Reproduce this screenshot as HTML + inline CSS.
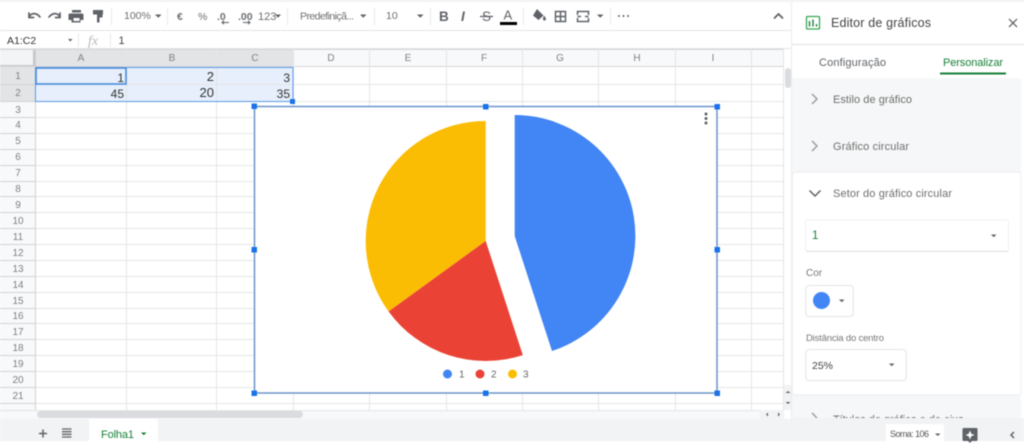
<!DOCTYPE html>
<html><head><meta charset="utf-8">
<style>
html,body{margin:0;padding:0;background:#fff;width:1024px;height:446px;overflow:hidden}
svg{display:block;filter:blur(.4px)}
text{font-family:"Liberation Sans",sans-serif;fill:#444}
.t{font-size:10.5px;fill:#6b6f73}
.h{font-size:10px;fill:#808080;text-anchor:middle}
.c{font-size:13px;fill:#333;text-anchor:end}
.p{font-size:11px;fill:#6e6e6e}
.s{fill:none;stroke:#5f6368;stroke-width:1.7}
.a{fill:#5f6368}
.sep{stroke:#e8eaed;stroke-width:1}
.ic{fill:#5f6368}
</style></head><body>
<svg width="1024" height="446" viewBox="0 0 1024 446" xmlns="http://www.w3.org/2000/svg">
<rect width="1024" height="446" fill="#fff"/>
<rect width="1024" height="2" fill="#f1f3f4"/>
<!-- toolbar -->
<path d="M0 30.500H792M0 48.500H792" stroke="#e2e3e5" stroke-width="1"/>
<g class="s" stroke-linecap="round">
<path d="M29 17c2-4 7-5 11 0M29 13v4.500h4.500"/>
<path d="M60 17c-2-4-7-5-11 0M60 13v4.500h-4.500"/>
</g>
<path class="ic" d="M72 12h9v-2.500h-9zM71 13h11a1.500 1.500 0 0 1 1.500 1.500v5h-3v2.500h-9v-2.500h-3v-5a1.500 1.500 0 0 1 1.500-1.500zM73.500 17.500v3h6v-3z" transform="translate(0 .5)"/>
<path class="ic" d="M93 10h10v4.500h-10zM97 14.500h5.500v3h-3v5h-2.500v-5z"/>
<path class="sep" d="M111.500 8v17M167.500 8v17M287.500 8v17M374.500 8v17M430.500 8v17M523.500 8v17M610.500 8v17"/>
<text class="t" x="124" y="19">100%</text>
<path class="a" d="M155 14.500h6.500l-3.250 3.200zM360 14.500h6.500l-3.250 3.200zM417 14.500h6.500l-3.250 3.200zM597 14.500h6.500l-3.250 3.200zM275 14.500h6l-3 3.200z"/>
<text class="t" x="177" y="20" font-weight="bold">€</text>
<text class="t" x="198" y="20">%</text>
<text class="t" x="217" y="20" font-weight="bold">.0</text>
<path d="M222 22.500h7M224 20.700l-2 1.800 2 1.800" fill="none" stroke="#5f6368"/>
<text class="t" x="238" y="20" font-weight="bold">.00</text>
<path d="M243 22.500h7M248 20.700l2 1.800-2 1.800" fill="none" stroke="#5f6368"/>
<text class="t" x="258" y="20" style="font-size:11px">123</text>
<text class="t" x="300" y="19.500" textLength="54">Predefiniçã...</text>
<text class="t" x="386" y="19">10</text>
<text x="439" y="21" font-size="13.500" font-weight="bold" style="fill:#5f6368">B</text>
<text x="461" y="21" font-size="13.500" font-weight="bold" font-style="italic" style="fill:#5f6368">I</text>
<text x="482" y="21" font-size="13.500" style="fill:#5f6368">S</text>
<path d="M480 16.500h13" stroke="#5f6368" stroke-width="1.300"/>
<text x="503.500" y="19.500" font-size="13" style="fill:#5f6368">A</text>
<rect x="500" y="22" width="17" height="3" fill="#000"/>
<path class="ic" d="M537 9l6.500 6.500-5 4.500-5.500-4.500zM544 15.500s2 2.500 2 3.500a1.500 1.500 0 0 1-3 0c0-1 1-3.500 1-3.500z"/>
<path d="M555.500 11.500h10v10h-10zM560.500 11.500v10M555.500 16.500h10" fill="none" stroke="#5f6368" stroke-width="1.500"/>
<path d="M577.500 15v-3.500h11V15M577.500 18v3.500h11V18M577.500 16.500h3.500M585 16.500h3.500" fill="none" stroke="#5f6368" stroke-width="1.500"/>
<circle cx="619" cy="16" r="1" class="a"/><circle cx="623.500" cy="16" r="1" class="a"/><circle cx="628" cy="16" r="1" class="a"/>
<path d="M774 18.500l4.500-4.500 4.500 4.500" fill="none" stroke="#5f6368" stroke-width="1.800"/>
<!-- formula -->
<text x="7" y="44" font-size="10.500" style="fill:#333">A1:C2</text>
<path class="a" d="M68 39h4.500l-2.250 2.500z"/>
<path class="sep" d="M78.500 33v14M110.500 33v14"/>
<text x="88" y="45" font-size="14" font-style="italic" style="font-family:'Liberation Serif',serif;fill:#bbb">fx</text>
<text x="118.500" y="44" font-size="11" style="fill:#444">1</text>
<!-- headers -->
<rect x="0" y="49" width="784" height="18" fill="#f8f9fa"/>
<rect x="0" y="49" width="35" height="18" fill="#f3f4f5"/>
<rect x="35" y="49" width="258" height="18" fill="#e3e4e6"/>
<rect x="0" y="67" width="35" height="343" fill="#f8f9fa"/>
<rect x="0" y="67" width="35" height="34.500" fill="#e3e4e6"/>
<rect x="33" y="49" width="3" height="18" fill="#c4c6c8"/>
<rect x="0" y="65" width="36" height="2" fill="#c4c6c8"/>
<!-- selection -->
<rect x="36" y="67" width="257" height="34.500" fill="#e6effb"/>
<!-- grid -->
<path d="M0 49.500H784M0 66.500H784" stroke="#d5d6d8" fill="none"/>
<path fill="none" stroke="#e4e5e6" d="M126.500 49V410M216.500 49V410M293.500 49V410M369.500 49V410M446.500 49V410M522.500 49V410M598.500 49V410M675.500 49V410M751.500 49V410M783.500 49V410M35 84.500H784M35 101.500H784M35 117.500H784M35 133.500H784M35 149.500H784M35 165.500H784M35 181.500H784M35 196.500H784M35 212.500H784M35 228.500H784M35 244.500H784M35 260.500H784M35 276.500H784M35 292.500H784M35 308.500H784M35 323.500H784M35 339.500H784M35 355.500H784M35 371.500H784M35 387.500H784M35 403.500H784"/>
<path fill="none" stroke="#d2d3d5" d="M35.500 49V410M0 84.500H35M0 101.500H35M0 117.500H35M0 133.500H35M0 149.500H35M0 165.500H35M0 181.500H35M0 196.500H35M0 212.500H35M0 228.500H35M0 244.500H35M0 260.500H35M0 276.500H35M0 292.500H35M0 308.500H35M0 323.500H35M0 339.500H35M0 355.500H35M0 371.500H35M0 387.500H35M0 403.500H35"/>
<!-- labels -->
<text class="h" x="81" y="61">A</text><text class="h" x="172" y="61">B</text><text class="h" x="255" y="61">C</text><text class="h" x="331" y="61">D</text><text class="h" x="408" y="61">E</text><text class="h" x="484" y="61">F</text><text class="h" x="560" y="61">G</text><text class="h" x="637" y="61">H</text><text class="h" x="713" y="61">I</text>
<text class="h" x="18" y="79">1</text><text class="h" x="18" y="96">2</text><text class="h" x="18" y="113">3</text><text class="h" x="18" y="128">4</text><text class="h" x="18" y="144">5</text><text class="h" x="18" y="160">6</text><text class="h" x="18" y="176">7</text><text class="h" x="18" y="192">8</text><text class="h" x="18" y="208">9</text><text class="h" x="18" y="224">10</text><text class="h" x="18" y="240">11</text><text class="h" x="18" y="256">12</text><text class="h" x="18" y="272">13</text><text class="h" x="18" y="288">14</text><text class="h" x="18" y="304">15</text><text class="h" x="18" y="319">16</text><text class="h" x="18" y="335">17</text><text class="h" x="18" y="351">18</text><text class="h" x="18" y="367">19</text><text class="h" x="18" y="383">20</text><text class="h" x="18" y="399">21</text>
<!-- cells -->
<text class="c" style="font-size:12px" x="124" y="82">1</text>
<text class="c" x="214" y="81">2</text>
<text class="c" style="font-size:12px" x="290" y="82">3</text>
<text class="c" style="font-size:12px" x="124" y="98">45</text>
<text class="c" x="214" y="97">20</text>
<text class="c" style="font-size:12px" x="290" y="98">35</text>
<rect x="35.500" y="67.500" width="257.500" height="34" fill="none" stroke="#5b9ae8" stroke-width="1"/>
<rect x="36" y="68" width="90" height="16" fill="none" stroke="#4a8bdc" stroke-width="1.600"/>
<rect x="290" y="99" width="5" height="5" fill="#1a73e8"/>
<!-- chart -->
<rect x="254.500" y="106.500" width="462.500" height="286.500" fill="#fff" stroke="#6a95cb" stroke-width="1.500"/>
<path d="M485.700 241L485.700 121A120 120 0 0 0 388.600 311.500Z" fill="#fbbc04"/>
<path d="M485.700 241L388.600 311.500A120 120 0 0 0 522.800 355.100Z" fill="#ea4335"/>
<path d="M514.700 236V115A121 121 0 0 1 552 351Z" fill="#4285f4"/>
<g fill="#1a73e8">
<rect x="251.500" y="103.500" width="5.500" height="5.500"/><rect x="483" y="104" width="5.500" height="5.500"/><rect x="714.500" y="104" width="5.500" height="5.500"/>
<rect x="251.500" y="247" width="5.500" height="5.500"/><rect x="714.500" y="247" width="5.500" height="5.500"/>
<rect x="251.500" y="390.500" width="5.500" height="5.500"/><rect x="483" y="390.500" width="5.500" height="5.500"/><rect x="714.500" y="390.500" width="5.500" height="5.500"/>
</g>
<circle cx="706" cy="114" r="1.500" fill="#5f6368"/><circle cx="706" cy="118.500" r="1.500" fill="#5f6368"/><circle cx="706" cy="123" r="1.500" fill="#5f6368"/>
<circle cx="447.500" cy="374" r="4.500" fill="#4285f4"/><text x="459" y="377.500" font-size="10" style="fill:#666">1</text>
<circle cx="480" cy="374" r="4.500" fill="#ea4335"/><text x="491" y="377.500" font-size="10" style="fill:#666">2</text>
<circle cx="512.500" cy="374" r="4.500" fill="#fbbc04"/><text x="523" y="377.500" font-size="10" style="fill:#666">3</text>
<!-- scrollbars -->
<rect x="784" y="49" width="8" height="361" fill="#fff"/>
<rect x="785" y="68" width="6" height="20" rx="3" fill="#dadce0"/>
<rect x="0" y="410" width="784" height="9" fill="#f8f9fa"/>
<path d="M0 410.500H784" stroke="#e4e5e6"/>
<rect x="37" y="411" width="266" height="7" rx="3.500" fill="#dadce0"/>
<rect x="784" y="385" width="8" height="25" fill="#f1f3f4"/>
<rect x="760" y="410" width="24" height="9" fill="#f1f3f4"/>
<path class="a" d="M785.500 393l2.500-2 2.500 2zM785.500 402l2.500 2 2.500-2zM766 414.500l2-2v4zM778 412.500l2 2-2 2z"/>
<!-- bottom bar -->
<rect x="0" y="419" width="1024" height="22" fill="#f1f3f4"/>
<rect x="89" y="419" width="69" height="22" fill="#fff"/>
<path d="M39 433.500h8M43 429.500v8" stroke="#5f6368" stroke-width="1.500"/>
<path d="M62 429h9.500M62 431.700h9.500M62 434.300h9.500M62 437h9.500" stroke="#5f6368" stroke-width="1.300"/>
<text x="101" y="438" font-size="11" textLength="33" style="fill:#188038">Folha1</text>
<path d="M141 432.500h5.500l-2.750 2.800z" fill="#188038"/>
<!-- right panel -->
<rect x="792" y="0" width="232" height="419" fill="#fff"/>
<rect x="792" y="0" width="232" height="2" fill="#f1f3f4"/>
<path d="M792 44.500H1024" stroke="#e0e1e3"/>
<path d="M791.500 2V419" stroke="#eceded"/>
<rect x="806.500" y="16.500" width="13" height="12.500" rx="1" fill="none" stroke="#34a853" stroke-width="1.300"/>
<path d="M809.500 21v5.500M813 19.500v7M816.500 24v2.500" stroke="#137333" stroke-width="1.300"/>
<text x="831" y="27" font-size="12.500" textLength="100" style="fill:#444">Editor de gráficos</text>
<path d="M1009 19l8 8M1017 19l-8 8" stroke="#555" stroke-width="1.200"/>
<text x="819" y="66" font-size="11" textLength="67" style="fill:#5f6368">Configuração</text>
<text x="943" y="66" font-size="11" textLength="60" style="fill:#188038">Personalizar</text>
<rect x="940" y="72.500" width="66" height="2" fill="#188038"/>
<rect x="792" y="78" width="229" height="341" fill="#f6f7f8"/>
<path d="M812 94l5 5-5 5M812 141l5 5-5 5" fill="none" stroke="#9aa0a6" stroke-width="1.500"/>
<text class="p" x="833" y="103" textLength="79">Estilo de gráfico</text>
<text class="p" x="833" y="150" textLength="76">Gráfico circular</text>
<rect x="792.500" y="172" width="228.500" height="223" rx="3" fill="#fff" stroke="#e8eaed" stroke-width=".7"/>
<path d="M809.500 190.500l5.500 5.500 5.500-5.500" fill="none" stroke="#5f6368" stroke-width="1.500"/>
<text class="p" x="833" y="197" textLength="119">Setor do gráfico circular</text>
<rect x="805.500" y="220" width="203" height="31" rx="2" fill="#fff" stroke="#eef0f1"/>
<path d="M806 251.500H1008" stroke="#e3e4e6"/>
<text x="812" y="239" font-size="11.500" style="fill:#188038">1</text>
<path class="a" d="M991 234.500h5.500l-2.750 2.800z"/>
<text x="806" y="276" font-size="10" style="fill:#777">Cor</text>
<rect x="805.800" y="285.500" width="47.500" height="31" rx="3" fill="#fff" stroke="#e3e4e6"/>
<circle cx="821.500" cy="300.500" r="8.500" fill="#4285f4"/>
<path class="a" d="M839 299.500h5.500l-2.750 2.800z"/>
<text x="806" y="341" font-size="9.500" textLength="78" style="fill:#777">Distância do centro</text>
<rect x="805.800" y="349.500" width="100.500" height="31" rx="3" fill="#fff" stroke="#e3e4e6"/>
<text x="812" y="369" font-size="10.500" style="fill:#444">25%</text>
<path class="a" d="M889 363.500h5.500l-2.750 2.800z"/>
<text class="p" x="833" y="423" textLength="131">Títulos de gráfico e de eixo</text>
<path d="M812 413l5 5" stroke="#9aa0a6" stroke-width="1.500"/>
<rect x="792" y="418" width="232" height="23" fill="#f1f3f4"/>
<rect x="886" y="424" width="58" height="17" fill="#fff"/>
<text x="890" y="437" font-size="9" textLength="39" style="fill:#555">Soma: 106</text>
<path class="a" d="M935 433.500h5.500l-2.750 2.500z"/>
<path d="M963.500 428h13a1 1 0 0 1 1 1v11a1 1 0 0 1-1 1h-4.500l-2 2-2-2h-4.500a1 1 0 0 1-1-1v-11a1 1 0 0 1 1-1z" fill="#5f6368"/>
<path d="M970 430.500l1.300 3.200 3.200 1.300-3.200 1.300-1.300 3.200-1.300-3.200-3.200-1.300 3.200-1.300z" fill="#fff"/>
<path d="M1014 432l-3 3 3 3" fill="none" stroke="#5f6368" stroke-width="1.500"/>
</svg>
</body></html>
